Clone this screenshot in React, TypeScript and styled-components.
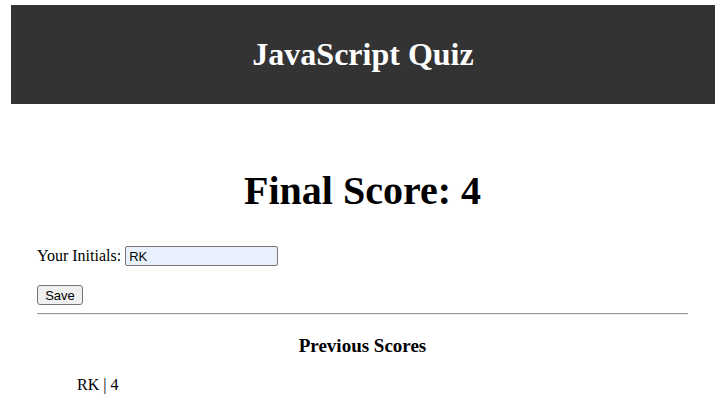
import React, { useState } from "react";
import styled, { createGlobalStyle } from "styled-components";

const GlobalStyle = createGlobalStyle`
  body {
    margin: 0;
    background: #ffffff;
    font-family: "Liberation Serif", "Times New Roman", serif;
    color: #000000;
  }
`;

const Header = styled.header`
  margin: 5px 10px 0 11px;
  height: 99px;
  background-color: #333333;
  display: flex;
  align-items: center;
  justify-content: center;

  & h1 {
    margin: 0;
    color: #ffffff;
    font-size: 32px;
    font-weight: bold;
  }
`;

const Main = styled.main`
  margin: 0 37px;
  padding-top: 64px;
`;

const ScoreTitle = styled.h2`
  margin: 0 0 32px;
  text-align: center;
  font-size: 40px;
  line-height: 46px;
  font-weight: bold;
`;

const InitialsRow = styled.div`
  display: flex;
  align-items: center;
  font-size: 16px;
  height: 20px;

  & label {
    margin-right: 4px;
  }
`;

const InitialsInput = styled.input`
  width: 153px;
  height: 20px;
  box-sizing: border-box;
  padding: 1px 3px;
  border: 1px solid #767676;
  border-radius: 2px;
  background: #e8f0fe;
  font-family: "Liberation Sans", Arial, sans-serif;
  font-size: 13px;
  color: #000000;
`;

const SaveButton = styled.button`
  margin-top: 19px;
  width: 46px;
  height: 20px;
  padding: 0;
  box-sizing: border-box;
  border: 1px solid #767676;
  border-radius: 3px;
  background: #efefef;
  font-family: "Liberation Sans", Arial, sans-serif;
  font-size: 13px;
  color: #000000;
`;

const Divider = styled.hr`
  margin: 8px 0 0;
  border: none;
  border-top: 1px solid #9a9a9a;
  border-bottom: 1px solid #eeeeee;
`;

const ScoresTitle = styled.h3`
  margin: 20px 0 0;
  text-align: center;
  font-size: 19px;
  font-weight: bold;
`;

const ScoreList = styled.ul`
  list-style: none;
  margin: 19px 0 0;
  padding-left: 40px;
  font-size: 16px;
`;

const App = () => {
  const [initials, setInitials] = useState("RK");
  const scores = [{ initials: "RK", score: 4 }];

  return (
    <>
      <GlobalStyle />
      <Header>
        <h1>JavaScript Quiz</h1>
      </Header>
      <Main>
        <ScoreTitle>Final Score: 4</ScoreTitle>
        <InitialsRow>
          <label htmlFor="initials">Your Initials:</label>
          <InitialsInput
            id="initials"
            value={initials}
            onChange={(e) => setInitials(e.target.value)}
          />
        </InitialsRow>
        <SaveButton>Save</SaveButton>
        <Divider />
        <ScoresTitle>Previous Scores</ScoresTitle>
        <ScoreList>
          {scores.map((s, i) => (
            <li key={i}>
              {s.initials} | {s.score}
            </li>
          ))}
        </ScoreList>
      </Main>
    </>
  );
};

export default App;
